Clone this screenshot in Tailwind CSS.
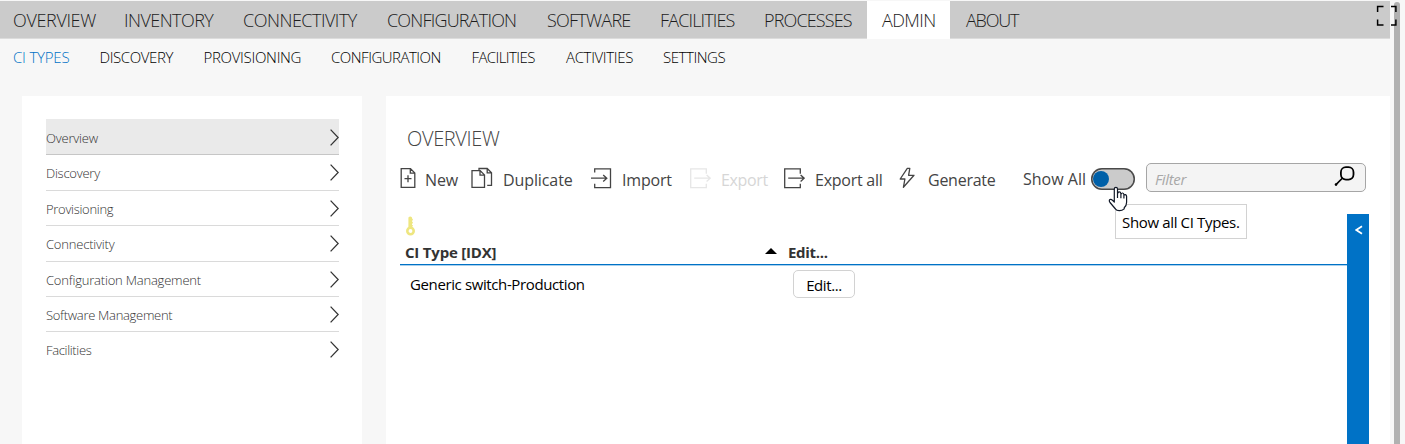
<!DOCTYPE html>
<html lang="en">
<head>
<meta charset="utf-8">
<title>CI Types</title>
<script src="https://cdn.jsdelivr.net/npm/@tailwindcss/browser@4"></script>
</head>
<body class="relative flex h-[444px] w-[1405px] flex-col overflow-hidden bg-[#f7f7f7] font-['Open_Sans',sans-serif] font-light text-black">

<nav class="mt-px flex h-[38px] w-[1390px] shrink-0 items-stretch border-b border-[#dcdcdc] bg-[#cbcbcb] text-[18px] leading-[39px] whitespace-nowrap text-[#1c1c1c]">
  <a class="w-[109px] pl-[13px] tracking-[-0.35px]">OVERVIEW</a>
  <a class="w-[119px] pl-[15px] tracking-[-0.55px]">INVENTORY</a>
  <a class="w-[144px] pl-[15px] tracking-[-0.5px]">CONNECTIVITY</a>
  <a class="w-[160px] pl-[15px] tracking-[-0.8px]">CONFIGURATION</a>
  <a class="w-[113px] pl-[15px] tracking-[-0.75px]">SOFTWARE</a>
  <a class="w-[104px] pl-[15px] tracking-[-0.85px]">FACILITIES</a>
  <a class="w-[118px] pl-[15px] tracking-[-0.85px]">PROCESSES</a>
  <a class="-mb-px w-[83px] bg-white pl-[15px] tracking-[-0.6px]">ADMIN</a>
  <a class="pl-4 tracking-[-1.2px]">ABOUT</a>
</nav>

<nav class="flex h-[57px] shrink-0 pl-[13px] text-[15px] leading-9 whitespace-nowrap">
  <a class="w-[86.5px] tracking-[-0.2px] text-[#0072c6]">CI TYPES</a>
  <a class="w-[104px] tracking-[-0.4px]">DISCOVERY</a>
  <a class="w-[127.5px] tracking-[-0.3px]">PROVISIONING</a>
  <a class="w-[140.5px] tracking-[-0.5px]">CONFIGURATION</a>
  <a class="w-[94.5px] tracking-[-0.6px]">FACILITIES</a>
  <a class="w-[97px] tracking-[-0.35px]">ACTIVITIES</a>
  <a class="tracking-[-0.45px]">SETTINGS</a>
</nav>

<div class="flex min-h-0 flex-1 gap-6 pl-[22px]">
  <aside class="w-[340px] shrink-0 bg-white pt-[23px] pl-6">
    <ul class="w-[293px] text-[13px] leading-[38px] text-[#333]">
      <li class="flex h-9 items-start justify-between border-b border-[#c6c6c6] bg-[#eaeaea]"><span class="tracking-[-0.2px]">Overview</span><svg class="mt-2.5 h-[17px] w-[9px]" viewBox="0 0 9 17" fill="none" stroke="#333" stroke-width="1.3"><path d="M.6.6 8.2 8.5.6 16.4"/></svg></li>
      <li class="flex h-9 items-start justify-between border-b border-[#dadada]"><span class="-mt-px tracking-[-0.25px]">Discovery</span><svg class="mt-[9px] h-[17px] w-[9px]" viewBox="0 0 9 17" fill="none" stroke="#333" stroke-width="1.3"><path d="M.6.6 8.2 8.5.6 16.4"/></svg></li>
      <li class="flex h-[35px] items-start justify-between border-b border-[#dadada]"><span class="-mt-px tracking-[-0.3px]">Provisioning</span><svg class="mt-[9px] h-[17px] w-[9px]" viewBox="0 0 9 17" fill="none" stroke="#333" stroke-width="1.3"><path d="M.6.6 8.2 8.5.6 16.4"/></svg></li>
      <li class="flex h-9 items-start justify-between border-b border-[#dadada]"><span class="-mt-px tracking-[-0.2px]">Connectivity</span><svg class="mt-[9px] h-[17px] w-[9px]" viewBox="0 0 9 17" fill="none" stroke="#333" stroke-width="1.3"><path d="M.6.6 8.2 8.5.6 16.4"/></svg></li>
      <li class="flex h-[35px] items-start justify-between border-b border-[#dadada]"><span class="-mt-px tracking-[-0.2px]">Configuration Management</span><svg class="mt-[9px] h-[17px] w-[9px]" viewBox="0 0 9 17" fill="none" stroke="#333" stroke-width="1.3"><path d="M.6.6 8.2 8.5.6 16.4"/></svg></li>
      <li class="flex h-[35px] items-start justify-between border-b border-[#dadada]"><span class="-mt-px tracking-[-0.3px]">Software Management</span><svg class="mt-[9px] h-[17px] w-[9px]" viewBox="0 0 9 17" fill="none" stroke="#333" stroke-width="1.3"><path d="M.6.6 8.2 8.5.6 16.4"/></svg></li>
      <li class="flex h-[35px] items-start justify-between"><span class="-mt-px tracking-[-0.35px]">Facilities</span><svg class="mt-[9px] h-[17px] w-[9px]" viewBox="0 0 9 17" fill="none" stroke="#333" stroke-width="1.3"><path d="M.6.6 8.2 8.5.6 16.4"/></svg></li>
    </ul>
  </aside>

  <main class="flex w-[1004px] shrink-0 flex-col bg-white pl-3.5">
    <h1 class="mt-[29px] h-[38px] shrink-0 pl-[7px] text-[20px] leading-7 tracking-[-0.35px] text-[#444]">OVERVIEW</h1>

    <div class="flex h-[30px] shrink-0 text-[16px] leading-[35px] font-normal whitespace-nowrap text-[#444]">
      <div class="flex w-[71px]">
        <svg class="mt-1 mr-[9px] h-[22px] w-4 shrink-0" viewBox="0 0 16 22" fill="none" stroke="#444" stroke-width="1.3"><path d="M1.2 1.7h9.3l4.3 4.2v14.4H1.2zM10.3 1.7v4.4h4.5M8 8.2v7M4.5 11.7h7"/></svg>
        <span class="tracking-[-0.1px]">New</span>
      </div>
      <div class="flex w-[119px]">
        <svg class="mt-1 mr-2.5 h-[22px] w-[22px] shrink-0" viewBox="0 0 22 22" fill="none" stroke="#444" stroke-width="1.3"><path d="M1 3.7h8.2l4.3 4.2v12.4H1zM9 3.7v4.4h4.5M8 3.7V1.5h8.2l4.3 4.2v12.6h-4.3M16.2 1.7v4.2h4.3"/></svg>
        <span class="tracking-[-0.1px]">Duplicate</span>
      </div>
      <div class="flex w-[99px]">
        <svg class="mt-1 mr-2.5 h-[22px] w-[22px] shrink-0" viewBox="0 0 22 22" fill="none" stroke="#444" stroke-width="1.3"><path d="M4.7 5.5V1.9h15.8v18.7H4.7v-3.8M1 11.2h15.7M13.2 7.9l3.6 3.3-3.6 3.3"/></svg>
        <span class="tracking-[-0.2px]">Import</span>
      </div>
      <div class="flex w-[94px] text-[#d6d6d6]">
        <svg class="mt-1 mr-2.5 h-[22px] w-[22px] shrink-0" viewBox="0 0 22 22" fill="none" stroke="#e6e6e6" stroke-width="1.3"><path d="M17.3 6.8V1.9H1.7v18.7h15.6v-3.8M5.2 11.2h15.7M17.6 7.9l3.6 3.3-3.6 3.3"/></svg>
        <span class="tracking-[-0.35px]">Export</span>
      </div>
      <div class="flex w-[115px]">
        <svg class="mt-1 mr-2.5 h-[22px] w-[22px] shrink-0" viewBox="0 0 22 22" fill="none" stroke="#444" stroke-width="1.3"><path d="M17.3 6.8V1.9H1.7v18.7h15.6v-3.8M5.2 11.2h15.7M17.6 7.9l3.6 3.3-3.6 3.3"/></svg>
        <span class="tracking-[-0.25px]">Export all</span>
      </div>
      <div class="flex w-[125px]">
        <svg class="mt-1 mr-[13px] ml-px h-[22px] w-4 shrink-0" viewBox="0 0 16 22" fill="none" stroke="#444" stroke-width="1.3" stroke-linejoin="round"><path d="M8.3 1.3 1.2 12h4.7l-1.5 8.3L15 8.3H9.6l1.2-7z"/></svg>
        <span class="tracking-[-0.25px]">Generate</span>
      </div>
      <span class="w-[68px] leading-[33px]">Show All</span>
      <div class="mt-[5px] h-[22px] w-11 rounded-full bg-[#cbcbcb] inset-ring-[1.5px] inset-ring-[#4a4a4a]"><div class="mt-[3px] ml-0.5 size-4 rounded-full bg-[#0060a8]"></div></div>
      <div class="ml-[11px] flex h-[29px] w-[220px] justify-between rounded-[5px] border border-[#a6a6a6] bg-[#f4f4f4] pr-[10px] pl-2 text-[15px] leading-[30px] text-[#a8a8a8] italic">
        <span class="tracking-[-0.35px]">Filter</span>
        <svg class="mt-[2px] h-[22px] w-[21px]" viewBox="0 0 21 22" fill="none" stroke="#000"><rect x="6.9" y="1.2" width="12.6" height="12.4" rx="5" stroke-width="1.8"/><path d="M8.8 11.8 2 18.6" stroke-width="1.6"/><circle cx="2" cy="18.6" r="1.3" fill="#000" stroke="none"/></svg>
      </div>
    </div>

    <div class="flex min-h-0 flex-1">
      <div class="w-[947px] pt-[23px]">
        <svg class="ml-[5px] block h-5 w-[11px]" viewBox="0 0 11 20" fill="none"><path d="M3.4 1.6Q5.3-.8 7 1.6v1.2h.8v1.6H7v1.4h.8v1.8H7V9h.8v1.6H7V12H3.4z" fill="#eee680"/><circle cx="5.5" cy="15" r="3.2" stroke="#eee680" stroke-width="2.6"/></svg>
        <div class="mt-[5px] border-b border-[#a9d0ed]">
          <div class="flex h-6 border-b border-[#0072c6] pl-[5px] text-[15px] leading-[22px] font-bold text-[#333]">
            <span class="w-[360px] tracking-[-0.2px]">CI Type [IDX]</span>
            <svg class="mt-[7px] mr-[11px] h-1.5 w-3" viewBox="0 0 12 6"><path d="M6 0l6 6H0z" fill="#000"/></svg>
            <span class="tracking-[-0.3px]">Edit...</span>
          </div>
        </div>
        <div class="flex pt-[3px] text-[15px] leading-[31px] font-normal">
          <span class="w-[393px] pl-2.5 tracking-[-0.38px]">Generic switch-Production</span>
          <button class="mt-px h-7 w-[62px] rounded-[5px] border border-[#d2d2d2] bg-white leading-7 tracking-[-0.4px]">Edit...</button>
        </div>
      </div>
      <div class="mt-[21px] w-[22px] bg-[#0072c6] pt-[11px] pl-2">
        <svg class="h-[10px] w-2" viewBox="0 0 8 10" fill="none" stroke="#fff" stroke-width="1.7"><path d="M7 1.2 1.3 5 7 8.8"/></svg>
      </div>
    </div>
  </main>
</div>

<div class="absolute top-0.5 right-[5px] h-[460px] w-1.5 rounded-t-full bg-[#b1b1b1]"></div>
<svg class="absolute top-[5px] left-[1376px] h-[21px] w-[22px]" viewBox="0 0 22 21" fill="none" stroke="#000" stroke-width="1.5"><path d="M1.6 7V1.6H7.5M15 1.6h4.9V7M1.6 14.5v5.6h5.9M15 20.1h4.9v-5.6"/></svg>

<div class="absolute top-[204px] left-[1115px] h-[35px] w-[132px] border border-[#d2d2d2] bg-white pl-1.5 text-[15px] leading-[35px] font-normal tracking-[-0.35px] whitespace-nowrap">Show all CI Types.</div>
<svg class="absolute top-[186px] left-[1108px] h-[26px] w-5" viewBox="0 0 20 26" fill="#fff" stroke="#111827" stroke-width="1.2" stroke-linejoin="round"><path d="M6.3 16V3Q6.3 1.4 7.9 1.4T9.5 3V8.3Q9.7 5.9 11.2 5.9T12.9 7.7V9Q13.1 6.9 14.5 7T15.9 8.8V9.8Q16.3 8.3 17.4 8.6T18.6 10.4V16.3Q18.6 19.7 16.2 21.7V22.9Q14 24.8 11.2 24.7T7.5 23L2 16.5Q.7 14.5 1.9 13.6T4.5 14.3zM9.5 8V12M12.9 9V12.3M15.9 9.8V12.5"/></svg>
</body>
</html>
